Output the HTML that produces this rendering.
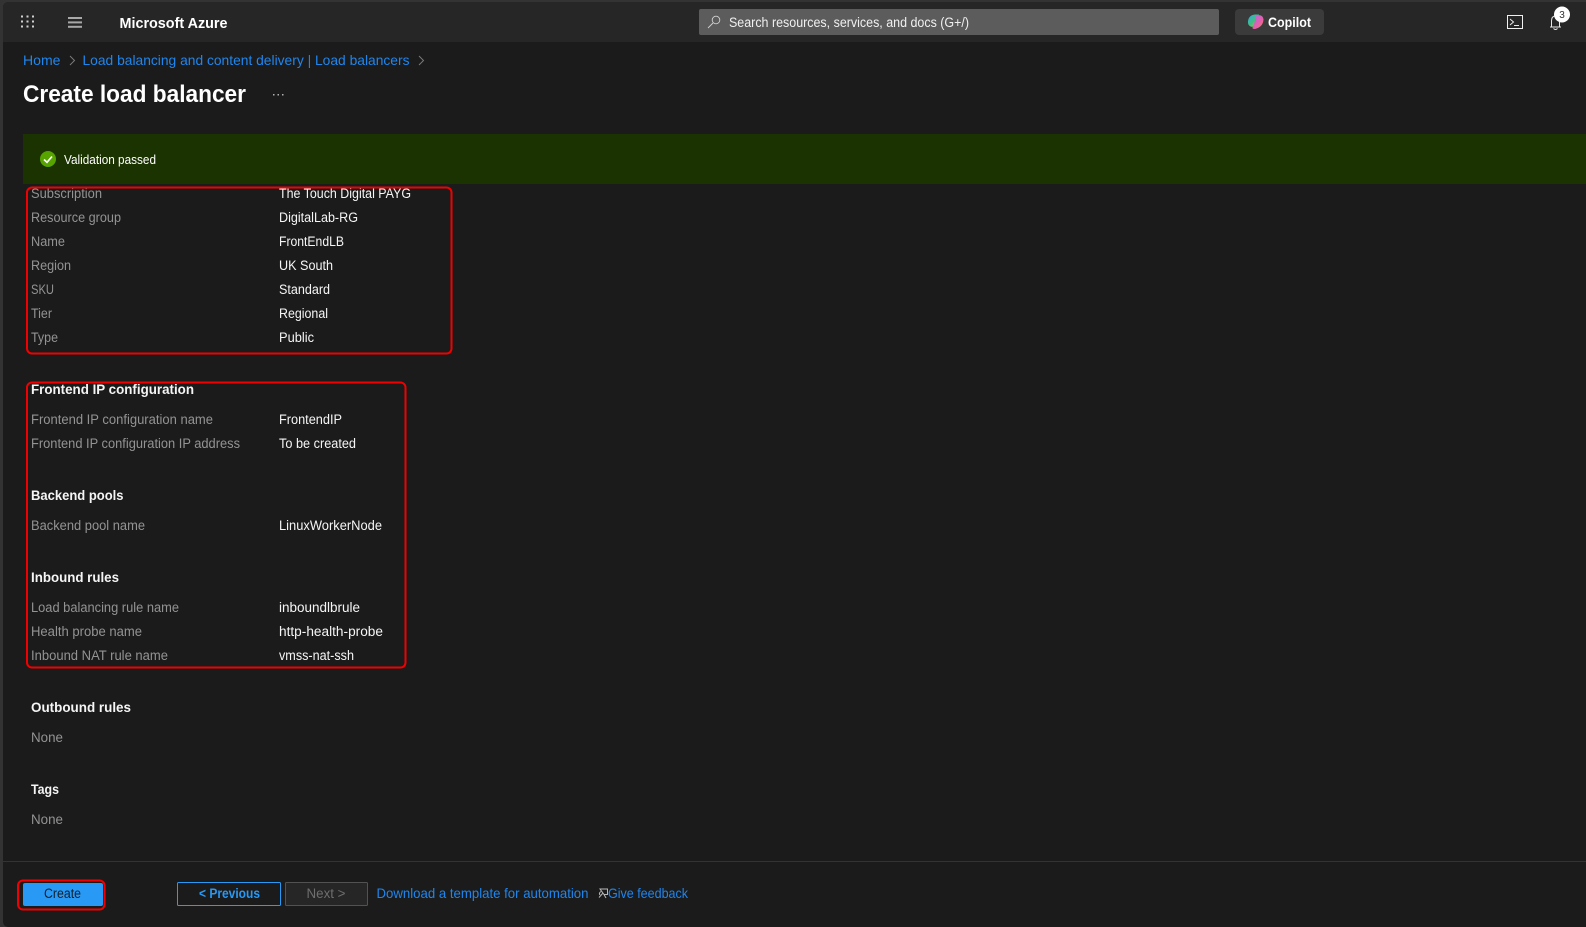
<!DOCTYPE html>
<html lang="en">
<head>
<meta charset="utf-8">
<title>Create load balancer - Microsoft Azure</title>
<style>
html,body{margin:0;padding:0;width:1586px;height:927px;overflow:hidden;background:#333}
svg{display:block}
text{font-family:"Liberation Sans",sans-serif;font-size:13.5px;}
.l{fill:#939393}
.v{fill:#f5f5f5}
.h{fill:#f5f5f5;font-weight:bold;font-size:14px}
.a{fill:#1f86ee;font-size:14px}
</style>
</head>
<body>
<svg width="1586" height="927" viewBox="0 0 1586 927" xmlns="http://www.w3.org/2000/svg">
<defs>
<linearGradient id="c1" x1="0" y1="0" x2="1" y2="1"><stop offset="0" stop-color="#2fa8e8"/><stop offset=".55" stop-color="#45c07a"/><stop offset="1" stop-color="#f2c83c"/></linearGradient>
<linearGradient id="c2" x1="0" y1="0" x2="1" y2="1"><stop offset="0" stop-color="#a86be8"/><stop offset=".6" stop-color="#e85fa8"/><stop offset="1" stop-color="#f08a4a"/></linearGradient>
</defs>
<!-- frame -->
<rect width="1586" height="927" fill="#333"/>
<path d="M9 2H1586V927H9Q3 927 3 921V8Q3 2 9 2Z" fill="#1b1b1b"/>
<!-- header -->
<path d="M9 2H1586V42H3V8Q3 2 9 2Z" fill="#262626"/>
<g fill="#d0d0d0">
<rect x="21" y="15.5" width="2" height="2"/><rect x="26.5" y="15.5" width="2" height="2"/><rect x="32" y="15.5" width="2" height="2"/>
<rect x="21" y="20.5" width="2" height="2"/><rect x="26.5" y="20.5" width="2" height="2"/><rect x="32" y="20.5" width="2" height="2"/>
<rect x="21" y="25.5" width="2" height="2"/><rect x="26.5" y="25.5" width="2" height="2"/><rect x="32" y="25.5" width="2" height="2"/>
</g>
<g fill="#a8a8a8">
<rect x="68" y="17" width="14" height="2"/><rect x="68" y="21.4" width="14" height="2"/><rect x="68" y="25.8" width="14" height="2"/>
</g>
<text x="119.5" y="28" textLength="108" lengthAdjust="spacingAndGlyphs" style="font-size:15px;font-weight:bold" fill="#fff">Microsoft Azure</text>
<rect x="699" y="9" width="520" height="26" rx="2" fill="#5c5c5c"/>
<circle cx="716" cy="20" r="3.8" fill="none" stroke="#d0d0d0" stroke-width="0.9"/>
<path d="M713 23L708 28" stroke="#d0d0d0" stroke-width="0.9" fill="none"/>
<text x="729" y="27" textLength="240" lengthAdjust="spacingAndGlyphs" fill="#f0f0f0">Search resources, services, and docs (G+/)</text>
<rect x="1235" y="9" width="89" height="26" rx="4" fill="#3b3b3b"/>
<path d="M1248 21Q1249 15 1255 14.5H1259L1256 22Q1255 28 1250.5 26.5Q1247.5 25 1248 21Z" fill="url(#c1)"/>
<path d="M1256 15.5Q1263 14 1263.5 19.5Q1263 27 1255 29Q1251 29 1253 26.5Q1255 22 1256 15.5Z" fill="url(#c2)"/>
<text x="1268" y="27" textLength="43" lengthAdjust="spacingAndGlyphs" style="font-size:14px;font-weight:bold" fill="#fff">Copilot</text>
<rect x="1507.5" y="15.5" width="15" height="13" fill="none" stroke="#f0f0f0" stroke-width="1"/>
<path d="M1510 19L1513.5 22L1510 25" fill="none" stroke="#e8e8e8" stroke-width="1"/>
<path d="M1514 25.5H1519" stroke="#e8e8e8" stroke-width="1"/>
<path d="M1550 27H1561M1551.5 27V21Q1551.5 16 1555.5 16Q1559.5 16 1559.5 21V27" fill="none" stroke="#e8e8e8" stroke-width="1"/>
<path d="M1553.5 28.5Q1555.5 30.5 1557.5 28.5" fill="none" stroke="#e8e8e8" stroke-width="1"/>
<circle cx="1562" cy="14.5" r="8" fill="#fff"/>
<text x="1562" y="18" text-anchor="middle" style="font-size:10px" fill="#333">3</text>
<!-- breadcrumb -->
<text class="a" x="23" y="65" textLength="37.5" lengthAdjust="spacingAndGlyphs">Home</text>
<path d="M70 56L74.5 60.5L70 65" fill="none" stroke="#7a7a7a" stroke-width="1"/>
<text class="a" x="82.5" y="65" textLength="327" lengthAdjust="spacingAndGlyphs">Load balancing and content delivery | Load balancers</text>
<path d="M419 56L423.5 60.5L419 65" fill="none" stroke="#7a7a7a" stroke-width="1"/>
<!-- title -->
<text x="23" y="102" textLength="223" lengthAdjust="spacingAndGlyphs" style="font-size:24px;font-weight:bold" fill="#fff">Create load balancer</text>
<g fill="#b0b0b0"><rect x="273" y="94" width="1.5" height="1.5"/><rect x="277.5" y="94" width="1.5" height="1.5"/><rect x="282" y="94" width="1.5" height="1.5"/></g>
<!-- banner -->
<rect x="23" y="134" width="1563" height="50" fill="#1a3300"/>
<circle cx="48" cy="159" r="8" fill="#57a300"/>
<path d="M44 159.5L47 162.3L52 156.5" fill="none" stroke="#fff" stroke-width="1.7"/>
<text x="64" y="164" textLength="92" lengthAdjust="spacingAndGlyphs" style="font-size:13px" fill="#fff">Validation passed</text>
<!-- summary -->
<text class="l" x="31" y="198" textLength="71" lengthAdjust="spacingAndGlyphs">Subscription</text>
<text class="v" x="279" y="198" textLength="132" lengthAdjust="spacingAndGlyphs">The Touch Digital PAYG</text>
<text class="l" x="31" y="222" textLength="90" lengthAdjust="spacingAndGlyphs">Resource group</text>
<text class="v" x="279" y="222" textLength="79" lengthAdjust="spacingAndGlyphs">DigitalLab-RG</text>
<text class="l" x="31" y="246" textLength="34" lengthAdjust="spacingAndGlyphs">Name</text>
<text class="v" x="279" y="246" textLength="65" lengthAdjust="spacingAndGlyphs">FrontEndLB</text>
<text class="l" x="31" y="270" textLength="40" lengthAdjust="spacingAndGlyphs">Region</text>
<text class="v" x="279" y="270" textLength="54" lengthAdjust="spacingAndGlyphs">UK South</text>
<text class="l" x="31" y="294" textLength="23" lengthAdjust="spacingAndGlyphs">SKU</text>
<text class="v" x="279" y="294" textLength="51" lengthAdjust="spacingAndGlyphs">Standard</text>
<text class="l" x="31" y="318" textLength="21" lengthAdjust="spacingAndGlyphs">Tier</text>
<text class="v" x="279" y="318" textLength="49" lengthAdjust="spacingAndGlyphs">Regional</text>
<text class="l" x="31" y="342" textLength="27" lengthAdjust="spacingAndGlyphs">Type</text>
<text class="v" x="279" y="342" textLength="35" lengthAdjust="spacingAndGlyphs">Public</text>
<rect x="27" y="187.5" width="424.5" height="166" rx="5" fill="none" stroke="#f00000" stroke-width="2"/>

<text class="h" x="31" y="394" textLength="163" lengthAdjust="spacingAndGlyphs">Frontend IP configuration</text>
<text class="l" x="31" y="424" textLength="182" lengthAdjust="spacingAndGlyphs">Frontend IP configuration name</text>
<text class="v" x="279" y="424" textLength="63" lengthAdjust="spacingAndGlyphs">FrontendIP</text>
<text class="l" x="31" y="448" textLength="209" lengthAdjust="spacingAndGlyphs">Frontend IP configuration IP address</text>
<text class="v" x="279" y="448" textLength="77" lengthAdjust="spacingAndGlyphs">To be created</text>
<text class="h" x="31" y="500" textLength="92.5" lengthAdjust="spacingAndGlyphs">Backend pools</text>
<text class="l" x="31" y="530" textLength="114" lengthAdjust="spacingAndGlyphs">Backend pool name</text>
<text class="v" x="279" y="530" textLength="103" lengthAdjust="spacingAndGlyphs">LinuxWorkerNode</text>
<text class="h" x="31" y="582" textLength="88" lengthAdjust="spacingAndGlyphs">Inbound rules</text>
<text class="l" x="31" y="612" textLength="148" lengthAdjust="spacingAndGlyphs">Load balancing rule name</text>
<text class="v" x="279" y="612" textLength="81" lengthAdjust="spacingAndGlyphs">inboundlbrule</text>
<text class="l" x="31" y="636" textLength="111" lengthAdjust="spacingAndGlyphs">Health probe name</text>
<text class="v" x="279" y="636" textLength="104" lengthAdjust="spacingAndGlyphs">http-health-probe</text>
<text class="l" x="31" y="660" textLength="137" lengthAdjust="spacingAndGlyphs">Inbound NAT rule name</text>
<text class="v" x="279" y="660" textLength="75" lengthAdjust="spacingAndGlyphs">vmss-nat-ssh</text>
<rect x="27" y="382.5" width="378.5" height="285" rx="5" fill="none" stroke="#f00000" stroke-width="2"/>

<text class="h" x="31" y="712" textLength="100" lengthAdjust="spacingAndGlyphs">Outbound rules</text>
<text class="l" x="31" y="742" textLength="32" lengthAdjust="spacingAndGlyphs">None</text>
<text class="h" x="31" y="794" textLength="28" lengthAdjust="spacingAndGlyphs">Tags</text>
<text class="l" x="31" y="824" textLength="32" lengthAdjust="spacingAndGlyphs">None</text>
<!-- footer -->
<rect x="3" y="861" width="1583" height="1" fill="#333"/>
<rect x="23" y="883" width="80" height="23" rx="2" fill="#2899f5"/>
<rect x="18" y="880.5" width="86.5" height="29" rx="5" fill="none" stroke="#f00000" stroke-width="2"/>
<text x="44" y="898" textLength="37" lengthAdjust="spacingAndGlyphs" fill="#10202e">Create</text>
<rect x="177.5" y="882.5" width="103" height="23" rx="1" fill="none" stroke="#2899f5" stroke-width="1"/>
<text x="199" y="898" textLength="61" lengthAdjust="spacingAndGlyphs" style="font-weight:bold" fill="#2899f5">&lt; Previous</text>
<rect x="285.5" y="882.5" width="82" height="23" rx="1" fill="#262626" stroke="#525252" stroke-width="1"/>
<text x="306.5" y="898" textLength="39" lengthAdjust="spacingAndGlyphs" fill="#6e6e6e">Next &gt;</text>
<text class="a" x="376.5" y="898" textLength="212" lengthAdjust="spacingAndGlyphs">Download a template for automation</text>
<path d="M600 889H607.5V894.5H604L600 889ZM603 893L599 897.5M604 894.5L606 898M601 891.5Q598.5 893 600 895" fill="none" stroke="#b8b8b8" stroke-width="1"/>
<text class="a" x="608" y="898" textLength="80" lengthAdjust="spacingAndGlyphs">Give feedback</text>
</svg>
</body>
</html>
